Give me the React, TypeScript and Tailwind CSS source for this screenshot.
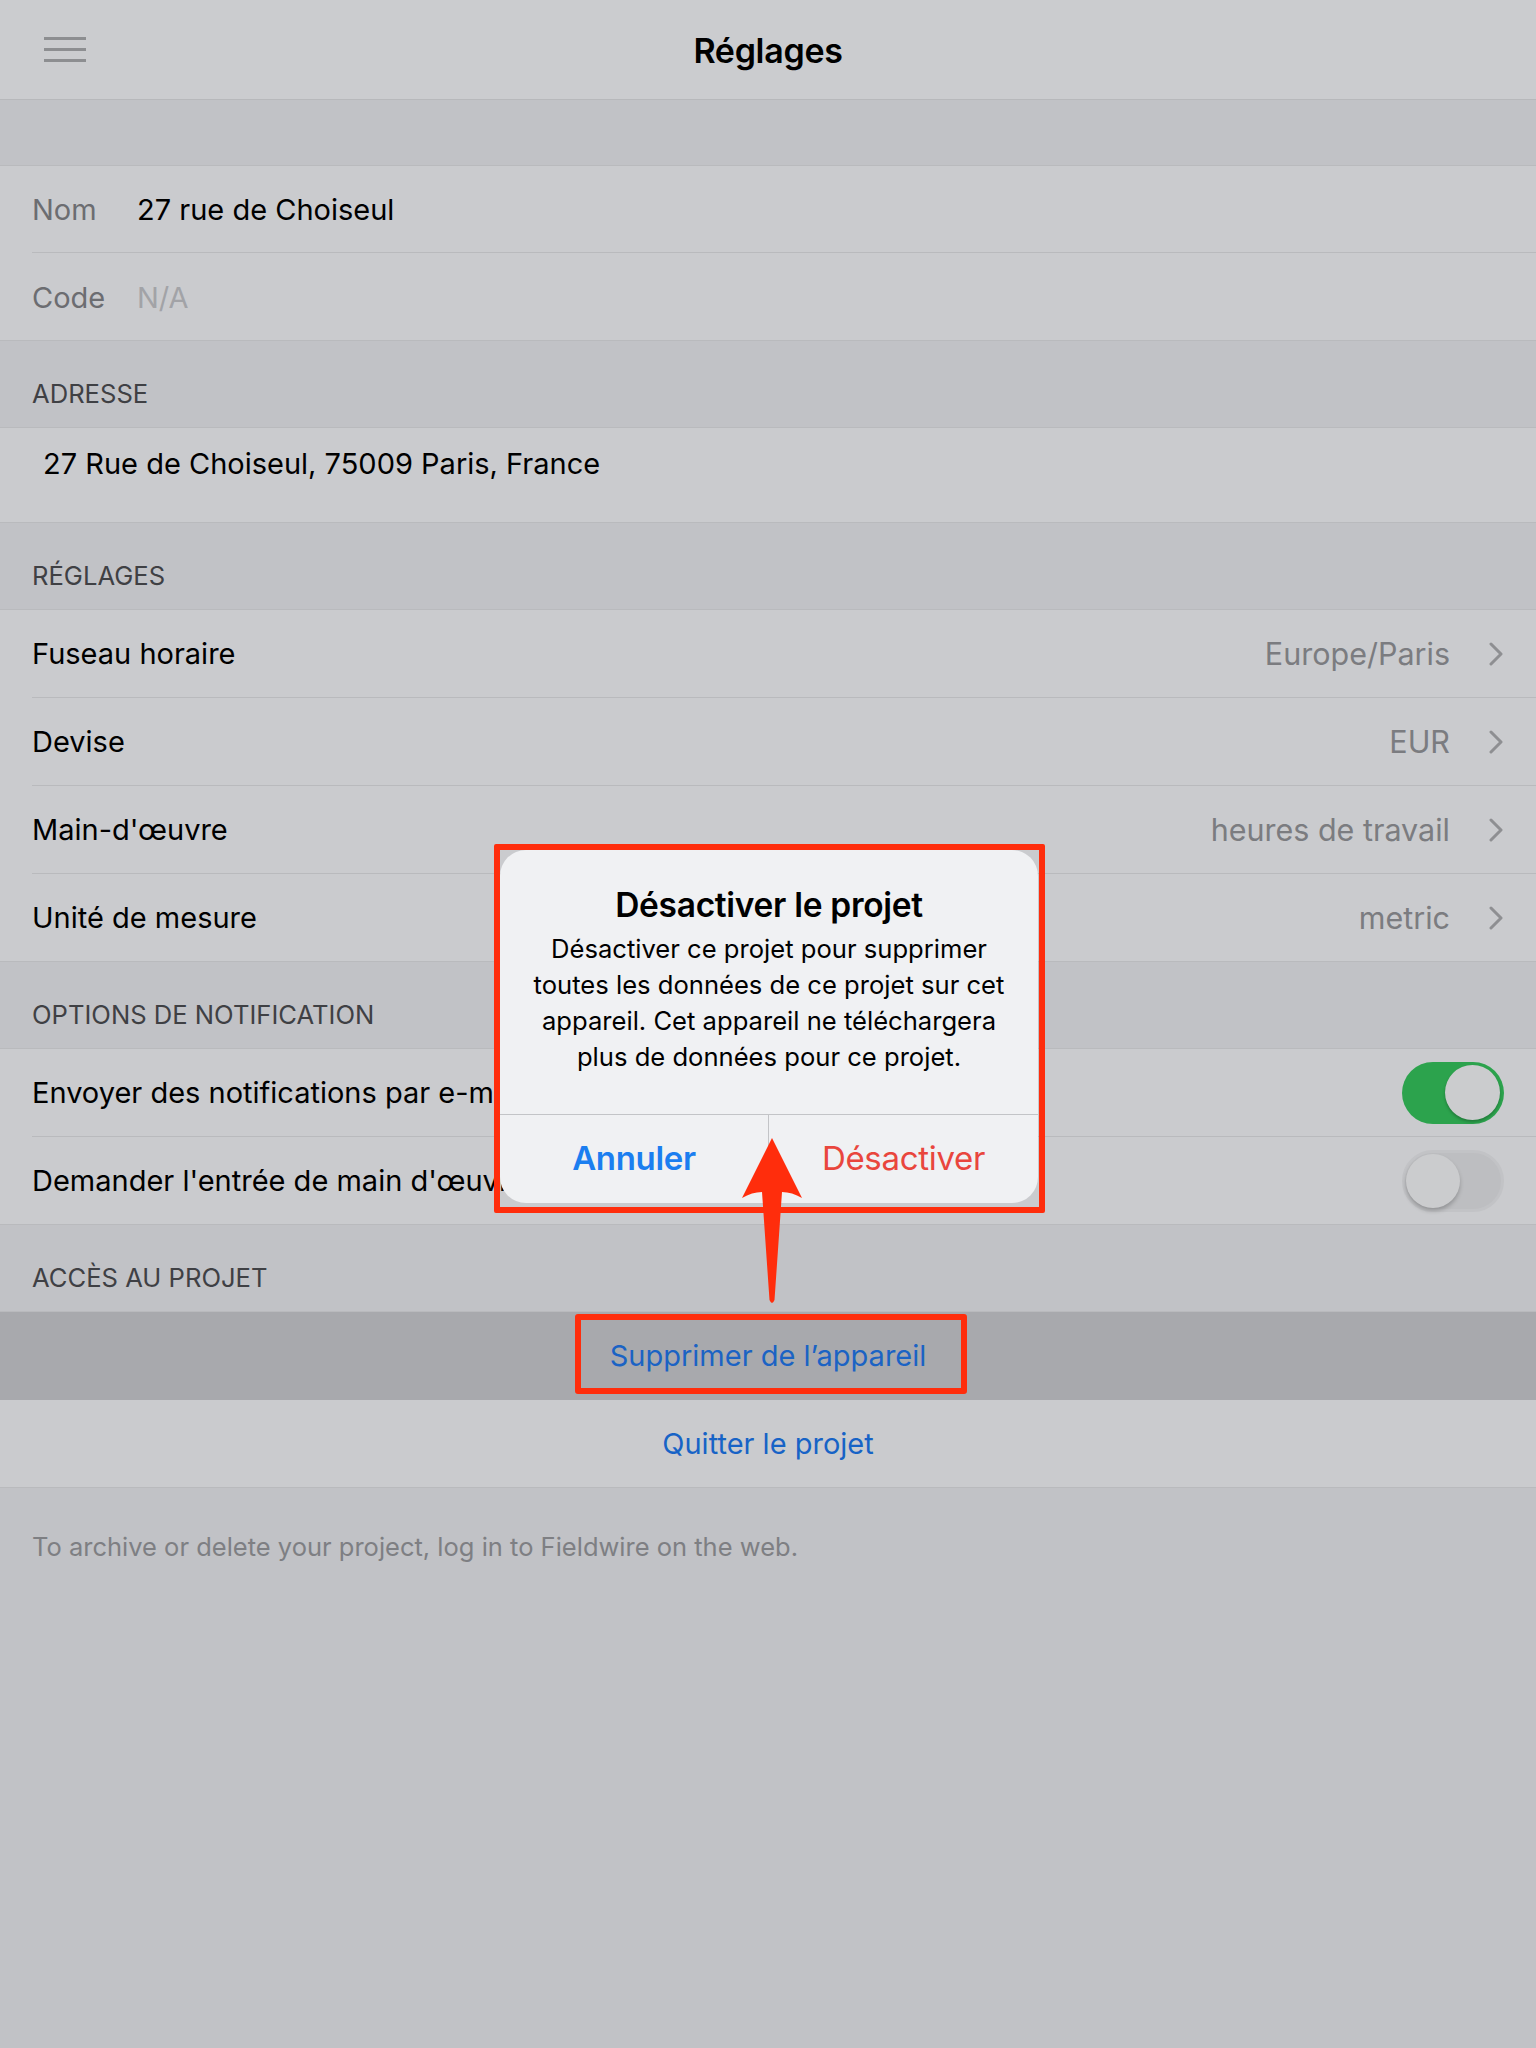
import * as React from "react";

const font = { fontFamily: "Inter, 'Noto Sans', sans-serif" };

function Chevron() {
  return (
    <svg width="16" height="24" viewBox="0 0 16 24" className="ml-[38px] shrink-0">
      <path d="M3 2 L13 12 L3 22" fill="none" stroke="#8e8f92" strokeWidth="3" strokeLinecap="round" strokeLinejoin="round" />
    </svg>
  );
}

function SectionHeader({ title }: { title: string }) {
  return (
    <div className="h-[87px] bg-[#c1c2c6] border-b border-[#b9babd] flex items-end pl-[32px] pb-[18px]">
      <span className="text-[25.6px] leading-[30px] text-[#3f4044]">{title}</span>
    </div>
  );
}

function ValueRow({ label, value, last }: { label: string; value: string; last?: boolean }) {
  return (
    <div className={`h-[88px] bg-[#cacbce] pl-[32px] ${last ? "border-b border-[#b9babd]" : ""}`}>
      <div className={`h-full flex items-center pr-[32px] ${last ? "" : "border-b border-[#b9babd]"}`}>
        <span className="text-[29px] text-black flex-1">{label}</span>
        <span className="text-[30.5px] text-[#7b7c80]">{value}</span>
        <Chevron />
      </div>
    </div>
  );
}

function Toggle({ on }: { on: boolean }) {
  if (on) {
    return (
      <div className="w-[102px] h-[62px] rounded-full bg-[#2ca34d] flex items-center justify-end pr-[4px]">
        <div className="w-[55px] h-[55px] rounded-full bg-[#cbccce] shadow-[0_2px_3px_rgba(0,0,0,0.25)]" />
      </div>
    );
  }
  return (
    <div className="w-[102px] h-[62px] rounded-full bg-[#bdbec1] border-[3px] border-[#c2c3c6] flex items-center pl-[1px]">
      <div className="w-[54px] h-[54px] rounded-full bg-[#cbccce] shadow-[0_3px_4px_rgba(0,0,0,0.22)]" />
    </div>
  );
}

function ToggleRow({ label, on, last }: { label: string; on: boolean; last?: boolean }) {
  return (
    <div className={`h-[88px] bg-[#cacbce] pl-[32px] ${last ? "border-b border-[#b9babd]" : ""}`}>
      <div className={`h-full flex items-center pr-[32px] ${last ? "" : "border-b border-[#b9babd]"}`}>
        <span className="text-[29px] text-black flex-1 whitespace-nowrap">{label}</span>
        <Toggle on={on} />
      </div>
    </div>
  );
}

export default function App() {
  return (
    <div className="relative w-[1536px] min-h-[2048px] bg-[#c1c2c6] overflow-hidden" style={font}>
      {/* barre de navigation */}
      <div className="h-[100px] bg-[#cbcccf] border-b border-[#b7b8bb] grid grid-cols-[1fr_auto_1fr] items-center">
        <div className="pl-[44px] flex flex-col gap-[8px]">
          <div className="w-[42px] h-[3px] bg-[#8d8e91]" />
          <div className="w-[42px] h-[3px] bg-[#8d8e91]" />
          <div className="w-[42px] h-[3px] bg-[#8d8e91]" />
        </div>
        <div className="text-[34px] font-semibold text-black tracking-[-0.3px] pt-[2px]">Réglages</div>
        <div />
      </div>

      <div className="h-[66px] bg-[#c1c2c6] border-b border-[#b9babd]" />

      {/* Nom / Code */}
      <div className="bg-[#cacbce] pl-[32px]">
        <div className="h-[87px] flex items-center border-b border-[#b9babd] pt-[2px]">
          <span className="w-[105px] text-[29px] text-[#6c6d71]">Nom</span>
          <span className="text-[29px] text-black">27 rue de Choiseul</span>
        </div>
      </div>
      <div className="h-[88px] bg-[#cacbce] pl-[32px] flex items-center border-b border-[#b9babd] pt-[2px]">
        <span className="w-[105px] text-[29px] text-[#6c6d71]">Code</span>
        <span className="text-[29px] text-[#a2a3a7]">N/A</span>
      </div>

      <SectionHeader title="ADRESSE" />
      <div className="h-[95px] bg-[#cacbce] border-b border-[#b9babd] pl-[43px] pt-[14px]">
        <span className="text-[29px] text-black">27 Rue de Choiseul, 75009 Paris, France</span>
      </div>

      <SectionHeader title="RÉGLAGES" />
      <ValueRow label="Fuseau horaire" value="Europe/Paris" />
      <ValueRow label="Devise" value="EUR" />
      <ValueRow label="Main-d'œuvre" value="heures de travail" />
      <ValueRow label="Unité de mesure" value="metric" last />

      <SectionHeader title="OPTIONS DE NOTIFICATION" />
      <ToggleRow label="Envoyer des notifications par e-mail" on />
      <ToggleRow label="Demander l'entrée de main d'œuvre" on={false} last />

      <SectionHeader title="ACCÈS AU PROJET" />
      <div className="h-[88px] bg-[#a8a9ad] flex items-center justify-center">
        <span className="text-[29px] text-[#1b63c4]">Supprimer de l’appareil</span>
      </div>
      <div className="h-[88px] bg-[#cacbce] border-b border-[#b9babd] flex items-center justify-center">
        <span className="text-[29px] text-[#1763c6]">Quitter le projet</span>
      </div>

      <div className="pl-[32px] pt-[40px]">
        <span className="text-[25.5px] text-[#7e7f83]">To archive or delete your project, log in to Fieldwire on the web.</span>
      </div>

      {/* alerte */}
      <div className="absolute left-[500px] top-[850px] w-[538px] h-[353px] rounded-[26px] bg-[#f0f1f3] flex flex-col">
        <div className="flex-1 flex flex-col items-center pt-[35px] text-center">
          <div className="text-[33.5px] leading-[40px] font-semibold text-black tracking-[-0.3px]">Désactiver le projet</div>
          <div className="mt-[6px] text-[25.6px] leading-[36px] text-black">
            Désactiver ce projet pour supprimer
            <br />
            toutes les données de ce projet sur cet
            <br />
            appareil. Cet appareil ne téléchargera
            <br />
            plus de données pour ce projet.
          </div>
        </div>
        <div className="h-[89px] border-t border-[#c3c4c7] grid grid-cols-2">
          <div className="flex items-center justify-center border-r border-[#c3c4c7]">
            <span className="text-[33px] font-semibold text-[#1b7ef0] tracking-[-0.3px]">Annuler</span>
          </div>
          <div className="flex items-center justify-center">
            <span className="text-[33px] text-[#e9463d] tracking-[-0.3px]">Désactiver</span>
          </div>
        </div>
      </div>

      {/* annotations */}
      <div className="absolute left-[494px] top-[844px] w-[551px] h-[369px] border-[6px] border-[#ff2d0c] rounded-[2px]" />
      <div className="absolute left-[575px] top-[1314px] w-[392px] h-[80px] border-[6px] border-[#ff2d0c] rounded-[3px]" />
      <svg className="absolute left-[740px] top-[1136px]" width="64" height="170" viewBox="0 0 64 170">
        <path d="M32 2 L62 62 Q52 56 42 56 L34.5 164 Q32 170 29.5 164 L22 56 Q12 56 2 62 Z" fill="#ff2d0c" />
      </svg>
    </div>
  );
}
